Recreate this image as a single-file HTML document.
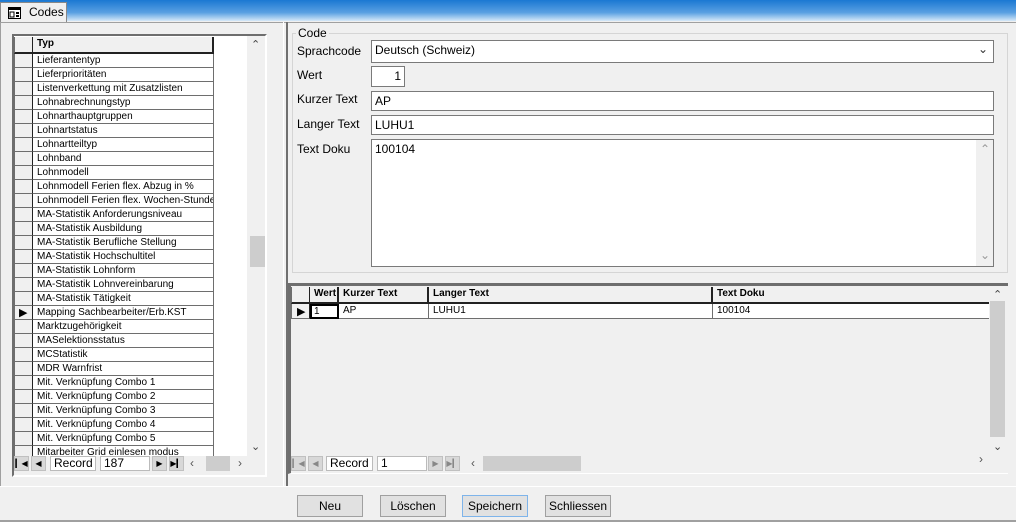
<!DOCTYPE html>
<html><head><meta charset="utf-8"><style>
*{box-sizing:border-box;margin:0;padding:0}
body{width:1016px;height:522px;background:#f0f0f0;font-family:"Liberation Sans",sans-serif;font-size:11px;position:relative;overflow:hidden;color:#000}
.a{position:absolute}
.title{left:0;top:0;width:1016px;height:21px;background:linear-gradient(#1a78d2,#5aa0e2 60%,#d6e8f8)}
.tab{left:0;top:2px;width:67px;height:20px;background:#f0f0f0;border:1px solid #888;border-bottom:none;font-size:12px;padding:2px 0 0 28px}
.inp{background:#fff;border:1px solid #7a7a7a;font-size:12px;padding:2px 3px}
.lbl{font-size:12px}
.row{position:absolute;left:0;height:14px;font-size:10px}
.sel{position:absolute;left:0;top:0;width:19px;height:14px;border-right:1px solid #222;border-bottom:1px solid #6e6e6e;border-left:1px solid #6e6e6e;background:#f0f0f0}
.cell{position:absolute;top:0;height:14px;background:#fff;padding:1px 4px;border-right:1px solid #6e6e6e;border-bottom:1px solid #6e6e6e;white-space:nowrap;overflow:hidden}
.btn{position:absolute;top:495px;width:66px;height:22px;border:1px solid #a0a0a0;background:#e1e1e1;font-size:12px;text-align:center;line-height:20px}
.nb{position:absolute;top:0;width:15px;height:15px;background:#d8d8d8;border:1px solid #c0c0c0;font-size:8px;text-align:center;line-height:13px}
</style></head><body>
<div class="a title"></div>
<div class="a tab"><svg class="a" style="left:7px;top:4px" width="13" height="12"><rect x="0.5" y="0.5" width="12" height="11" fill="#fff" stroke="#000"/><rect x="0" y="0" width="13" height="3" fill="#000"/><rect x="2" y="5" width="4" height="5" fill="none" stroke="#000"/><rect x="8" y="5" width="3" height="2" fill="#000"/><rect x="8" y="8" width="3" height="2" fill="#000"/></svg>Codes</div>
<div class="a" style="left:0;top:22px;width:1016px;height:1px;background:#a0a0a0"></div>

<!-- left panel -->
<div class="a" style="left:0;top:22px;width:1px;height:464px;background:#a0a0a0"></div>
<div class="a" style="left:12px;top:34px;width:255px;height:443px;border:2px solid #6e6e6e;border-right-color:#fff;border-bottom-color:#fff;background:#f0f0f0">
 <div class="a" style="left:0;top:0;width:233px;height:420px;overflow:hidden;background:#fff">
  <div class="row" style="top:1px;height:16px"><div class="sel" style="height:17px;border-bottom:2px solid #222"></div><div class="cell" style="left:19px;width:181px;height:17px;background:#f0f0f0;font-weight:bold;border-right:2px solid #222;border-bottom:2px solid #222">Typ</div></div>
  <div id="rows"></div>
 </div>
 <div class="a" style="left:234px;top:0;width:17px;height:420px;background:#f0f0f0">
  <div class="a" style="left:3px;top:2px;font-size:11px;color:#444">&#8963;</div>
  <div class="a" style="left:2px;top:200px;width:15px;height:31px;background:#cdcdcd"></div>
  <div class="a" style="left:3px;top:404px;font-size:11px;color:#444">&#8964;</div>
 </div>
 <div class="a" style="left:0;top:420px;width:251px;height:16px">
  <div class="nb" style="left:0">&#9614;&#9664;</div><div class="nb" style="left:17px">&#9664;</div>
  <div class="a" style="left:36px;top:0;width:46px;height:15px;background:#fff;border:1px solid #bbb;font-size:12px;line-height:13px;padding-left:3px">Record</div>
  <div class="a" style="left:86px;top:0;width:50px;height:15px;background:#fff;border:1px solid #bbb;font-size:12px;line-height:13px;padding-left:3px">187</div>
  <div class="nb" style="left:138px">&#9654;</div><div class="nb" style="left:155px">&#9654;&#9614;</div>
  <div class="a" style="left:176px;top:0;font-size:12px;color:#555">&lsaquo;</div>
  <div class="a" style="left:192px;top:0;width:24px;height:15px;background:#cdcdcd"></div>
  <div class="a" style="left:224px;top:0;font-size:12px;color:#555">&rsaquo;</div>
 </div>
</div>

<!-- splitter -->
<div class="a" style="left:283px;top:22px;width:1px;height:464px;background:#fff"></div>
<div class="a" style="left:286px;top:22px;width:2px;height:464px;background:#707070"></div>

<!-- group box -->
<div class="a" style="left:292px;top:33px;width:716px;height:240px;border:1px solid #d5d5d5"></div>
<div class="a lbl" style="left:296px;top:26px;background:#f0f0f0;padding:0 2px">Code</div>
<div class="a lbl" style="left:297px;top:44px">Sprachcode</div>
<div class="a inp" style="left:371px;top:40px;width:623px;height:23px">Deutsch (Schweiz)<span class="a" style="right:5px;top:1px;font-size:12px;color:#333">&#8964;</span></div>
<div class="a lbl" style="left:297px;top:68px">Wert</div>
<div class="a inp" style="left:371px;top:66px;width:34px;height:21px;text-align:right">1</div>
<div class="a lbl" style="left:297px;top:92px">Kurzer Text</div>
<div class="a inp" style="left:371px;top:91px;width:623px;height:20px">AP</div>
<div class="a lbl" style="left:297px;top:117px">Langer Text</div>
<div class="a inp" style="left:371px;top:115px;width:623px;height:20px">LUHU1</div>
<div class="a lbl" style="left:297px;top:142px">Text Doku</div>
<div class="a inp" style="left:371px;top:139px;width:623px;height:128px">100104
 <div class="a" style="right:0;top:0;width:17px;height:126px;background:#f0f0f0"><span class="a" style="left:4px;top:2px;color:#999">&#8963;</span><span class="a" style="left:4px;top:108px;color:#999">&#8964;</span></div></div>

<!-- bottom grid -->
<div class="a" style="left:288px;top:283px;width:720px;height:191px;border-top:3px solid #6e6e6e;border-left:3px solid #6e6e6e;border-bottom:1px solid #fff;background:#f0f0f0">
 <div class="row" style="top:1px;height:16px;width:698px"><div class="sel" style="height:17px;border-bottom:2px solid #222"></div>
  <div class="cell" style="left:19px;width:29px;height:17px;background:#f0f0f0;font-weight:bold;border-right:2px solid #222;border-bottom:2px solid #222">Wert</div>
  <div class="cell" style="left:48px;width:90px;height:17px;background:#f0f0f0;font-weight:bold;border-right:2px solid #222;border-bottom:2px solid #222">Kurzer Text</div>
  <div class="cell" style="left:138px;width:284px;height:17px;background:#f0f0f0;font-weight:bold;border-right:2px solid #222;border-bottom:2px solid #222">Langer Text</div>
  <div class="cell" style="left:422px;width:276px;height:17px;background:#f0f0f0;font-weight:bold;border-right:none;border-bottom:2px solid #222">Text Doku</div></div>
 <div class="row" style="top:18px;width:698px"><div class="sel" style="height:15px"><span class="a" style="left:5px;top:1px;font-size:11px">&#9654;</span></div>
  <div class="cell" style="left:19px;width:29px;height:15px;border:2px solid #000;padding:0 2px">1</div>
  <div class="cell" style="left:48px;width:90px;height:15px">AP</div>
  <div class="cell" style="left:138px;width:284px;height:15px">LUHU1</div>
  <div class="cell" style="left:422px;width:276px;height:15px;border-right:none">100104</div></div>
 <div class="a" style="left:698px;top:0;width:18px;height:153px"><span class="a" style="left:4px;top:2px;color:#444">&#8963;</span><div class="a" style="left:1px;top:15px;width:15px;height:136px;background:#cdcdcd"></div><span class="a" style="left:4px;top:154px;color:#444">&#8964;</span></div>
 <div class="a" style="left:0;top:170px;width:716px;height:16px">
  <div class="nb" style="left:0;color:#888">&#9614;&#9664;</div><div class="nb" style="left:17px;color:#888">&#9664;</div>
  <div class="a" style="left:35px;top:0;width:47px;height:15px;background:#fff;border:1px solid #bbb;font-size:12px;line-height:13px;padding-left:3px">Record</div>
  <div class="a" style="left:86px;top:0;width:50px;height:15px;background:#fff;border:1px solid #bbb;font-size:12px;line-height:13px;padding-left:3px">1</div>
  <div class="nb" style="left:137px;color:#888">&#9654;</div><div class="nb" style="left:154px;color:#888">&#9654;&#9614;</div>
  <div class="a" style="left:180px;top:0;font-size:12px;color:#555">&lsaquo;</div>
  <div class="a" style="left:192px;top:0;width:98px;height:15px;background:#cdcdcd"></div>
  <div class="a" style="left:688px;top:-4px;font-size:12px;color:#555">&rsaquo;</div>
 </div>
</div>

<div class="a" style="left:0;top:486px;width:1016px;height:1px;background:#fff"></div>
<div class="a" style="left:0;top:520px;width:1016px;height:2px;background:#a0a0a0"></div>
<div class="btn" style="left:297px">Neu</div>
<div class="btn" style="left:380px">Löschen</div>
<div class="btn" style="left:462px;border-color:#7eb4ea">Speichern</div>
<div class="btn" style="left:545px">Schliessen</div>

<script>
var t=["Lieferantentyp","Lieferprioritäten","Listenverkettung mit Zusatzlisten","Lohnabrechnungstyp","Lohnarthauptgruppen","Lohnartstatus","Lohnartteiltyp","Lohnband","Lohnmodell","Lohnmodell Ferien flex. Abzug in %","Lohnmodell Ferien flex. Wochen-Stunden","MA-Statistik Anforderungsniveau","MA-Statistik Ausbildung","MA-Statistik Berufliche Stellung","MA-Statistik Hochschultitel","MA-Statistik Lohnform","MA-Statistik Lohnvereinbarung","MA-Statistik Tätigkeit","Mapping Sachbearbeiter/Erb.KST","Marktzugehörigkeit","MASelektionsstatus","MCStatistik","MDR Warnfrist","Mit. Verknüpfung Combo 1","Mit. Verknüpfung Combo 2","Mit. Verknüpfung Combo 3","Mit. Verknüpfung Combo 4","Mit. Verknüpfung Combo 5","Mitarbeiter Grid einlesen modus"];
var h="";for(var i=0;i<t.length;i++){h+='<div class="row" style="top:'+(18+i*14)+'px;width:201px"><div class="sel">'+(i==18?'<span class="a" style="left:4px;top:0;font-size:11px">&#9654;</span>':'')+'</div><div class="cell" style="left:19px;width:181px">'+t[i]+'</div></div>';}
document.getElementById("rows").outerHTML=h;
</script>
</body></html>
